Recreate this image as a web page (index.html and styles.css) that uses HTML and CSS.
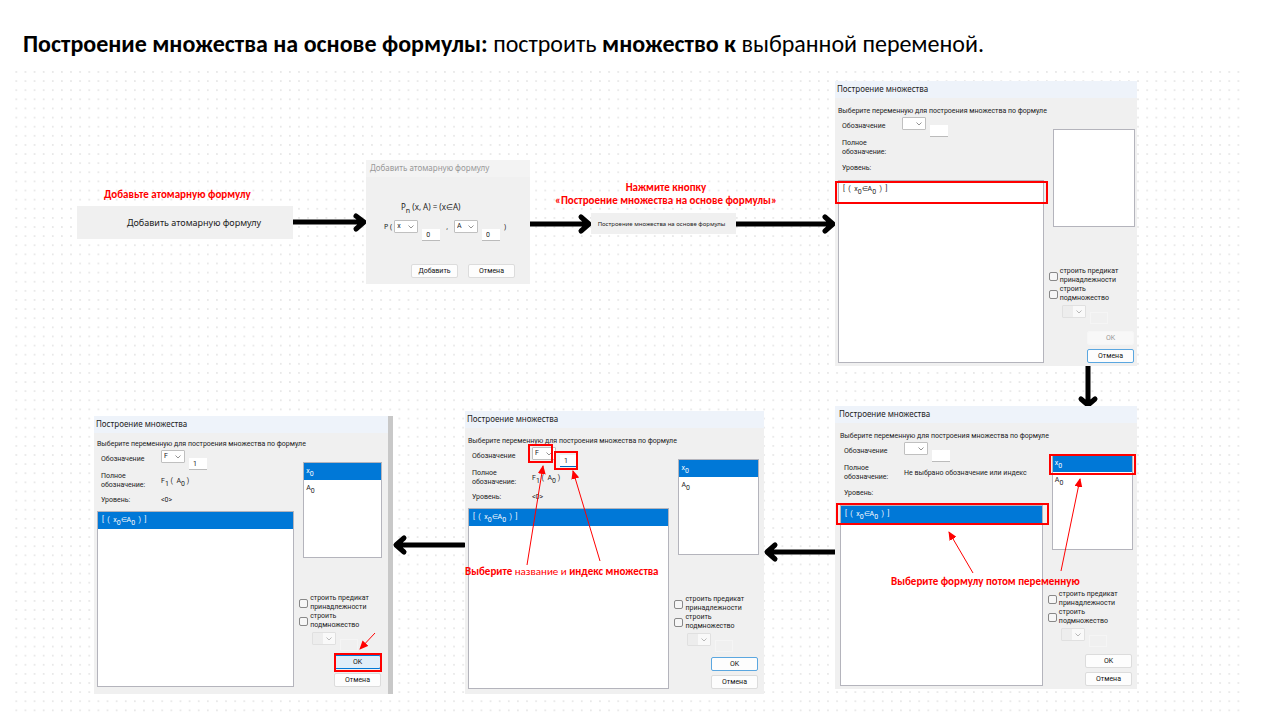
FILE: index.html
```html
<!DOCTYPE html>
<html lang="ru">
<head>
<meta charset="utf-8">
<title>Построение множества на основе формулы</title>
<link rel="stylesheet" href="styles.css">
</head>
<body>
<main class="slide">
  <svg class="layer" width="1280" height="720" viewBox="0 0 1280 720" aria-hidden="true">
    <defs>
      <pattern id="dots" x="11.8" y="67.4" width="9.12" height="9.12" patternUnits="userSpaceOnUse">
        <circle cx="4.5" cy="4.5" r="0.9" fill="#e2e2e2"/>
      </pattern>
    </defs>
    <rect x="12" y="67" width="1230" height="646" fill="url(#dots)"/>
    <g class="flow">
      <path d="M293 222H363M356 216L364 222L356 229"/>
      <path d="M530 224H588M581 217L589 224L581 231"/>
      <path d="M736 224H832M825 217L833 224L825 231"/>
      <path d="M1088 366V404M1081 399L1088 405L1095 399"/>
      <path d="M835 552H768M775 545L767 552L775 559"/>
      <path d="M464 545H397M404 538L396 545L404 552"/>
    </g>
  </svg>

  <h1 class="title">Построение множества на основе формулы: <span class="light">построить</span> множество к <span class="light">выбранной переменой.</span></h1>

  <p class="caption caption-add">Добавьте атомарную формулу</p>
  <button class="strip strip-add" type="button">Добавить атомарную формулу</button>

  <form class="atom">
    <h2 class="bar">Добавить атомарную формулу</h2>
    <p class="definition">P<sub>n</sub> (x, A) = (x∈A)</p>
    <div class="predicate">
      <span>P (</span>
      <select class="pick" aria-label="Переменная"><option>x</option></select>
      <input class="index" aria-label="Индекс переменной" value="0">
      <span class="comma">,</span>
      <select class="pick" aria-label="Множество"><option>A</option></select>
      <input class="index" aria-label="Индекс множества" value="0">
      <span>)</span>
    </div>
    <div class="atom-actions">
      <button class="btn" type="button">Добавить</button>
      <button class="btn" type="button">Отмена</button>
    </div>
  </form>

  <p class="caption caption-press">Нажмите кнопку<br>«Построение множества на основе формулы»</p>
  <button class="strip strip-build" type="button">Построение множества на основе формулы</button>

  <form class="dialog dialog-empty">
    <h2 class="bar">Построение множества</h2>
    <div class="body">
      <div class="left">
        <p class="prompt">Выберите переменную для построения множества по формуле</p>
        <div class="row"><span class="name">Обозначение</span><select class="pick" aria-label="Обозначение"><option></option></select><input class="index" aria-label="Индекс"></div>
        <div class="row full"><span class="name">Полное обозначение:</span><span></span></div>
        <div class="row level"><span class="name">Уровень:</span><span></span></div>
        <ul class="list formulas"><li>[ &nbsp;( &nbsp;x<sub>0</sub>∈A<sub>0</sub> &nbsp;) &nbsp;]</li></ul>
      </div>
      <div class="right">
        <ul class="list variables"></ul>
        <div class="options">
          <label class="check"><input type="checkbox"><span>строить предикат принадлежности</span></label>
          <label class="check"><input type="checkbox"><span>строить подмножество</span></label>
          <div class="sub"><select class="pick" aria-label="Подмножество" disabled><option></option></select><input class="index" aria-label="Индекс подмножества" disabled></div>
        </div>
        <div class="actions"><button class="btn" type="button" disabled>OK</button><button class="btn focus" type="button">Отмена</button></div>
      </div>
    </div>
  </form>

  <form class="dialog dialog-chosen">
    <h2 class="bar">Построение множества</h2>
    <div class="body">
      <div class="left">
        <p class="prompt">Выберите переменную для построения множества по формуле</p>
        <div class="row"><span class="name">Обозначение</span><select class="pick" aria-label="Обозначение"><option></option></select><input class="index" aria-label="Индекс"></div>
        <div class="row full"><span class="name">Полное обозначение:</span><span>Не выбрано обозначение или индекс</span></div>
        <div class="row level"><span class="name">Уровень:</span><span></span></div>
        <ul class="list formulas"><li class="on">[ &nbsp;( &nbsp;x<sub>0</sub>∈A<sub>0</sub> &nbsp;) &nbsp;]</li></ul>
      </div>
      <div class="right">
        <ul class="list variables"><li class="on">x<sub>0</sub></li><li>A<sub>0</sub></li></ul>
        <div class="options">
          <label class="check"><input type="checkbox"><span>строить предикат принадлежности</span></label>
          <label class="check"><input type="checkbox"><span>строить подмножество</span></label>
          <div class="sub"><select class="pick" aria-label="Подмножество" disabled><option></option></select><input class="index" aria-label="Индекс подмножества" disabled></div>
        </div>
        <div class="actions"><button class="btn" type="button">OK</button><button class="btn" type="button">Отмена</button></div>
      </div>
    </div>
  </form>

  <form class="dialog dialog-named">
    <h2 class="bar">Построение множества</h2>
    <div class="body">
      <div class="left">
        <p class="prompt">Выберите переменную для построения множества по формуле</p>
        <div class="row"><span class="name">Обозначение</span><select class="pick" aria-label="Обозначение"><option>F</option></select><input class="index editing" aria-label="Индекс" value="1"></div>
        <div class="row full"><span class="name">Полное обозначение:</span><span>F<sub>1</sub> ( &nbsp;A<sub>0</sub> )</span></div>
        <div class="row level"><span class="name">Уровень:</span><span>&lt;0&gt;</span></div>
        <ul class="list formulas"><li class="on">[ &nbsp;( &nbsp;x<sub>0</sub>∈A<sub>0</sub> &nbsp;) &nbsp;]</li></ul>
      </div>
      <div class="right">
        <ul class="list variables"><li class="on">x<sub>0</sub></li><li>A<sub>0</sub></li></ul>
        <div class="options">
          <label class="check"><input type="checkbox"><span>строить предикат принадлежности</span></label>
          <label class="check"><input type="checkbox"><span>строить подмножество</span></label>
          <div class="sub"><select class="pick" aria-label="Подмножество" disabled><option></option></select><input class="index" aria-label="Индекс подмножества" disabled></div>
        </div>
        <div class="actions"><button class="btn focus" type="button">OK</button><button class="btn" type="button">Отмена</button></div>
      </div>
    </div>
  </form>

  <form class="dialog dialog-final">
    <h2 class="bar">Построение множества</h2>
    <div class="body">
      <div class="left">
        <p class="prompt">Выберите переменную для построения множества по формуле</p>
        <div class="row"><span class="name">Обозначение</span><select class="pick" aria-label="Обозначение"><option>F</option></select><input class="index" aria-label="Индекс" value="1"></div>
        <div class="row full"><span class="name">Полное обозначение:</span><span>F<sub>1</sub> ( &nbsp;A<sub>0</sub> )</span></div>
        <div class="row level"><span class="name">Уровень:</span><span>&lt;0&gt;</span></div>
        <ul class="list formulas"><li class="on">[ &nbsp;( &nbsp;x<sub>0</sub>∈A<sub>0</sub> &nbsp;) &nbsp;]</li></ul>
      </div>
      <div class="right">
        <ul class="list variables"><li class="on">x<sub>0</sub></li><li>A<sub>0</sub></li></ul>
        <div class="options">
          <label class="check"><input type="checkbox"><span>строить предикат принадлежности</span></label>
          <label class="check"><input type="checkbox"><span>строить подмножество</span></label>
          <div class="sub"><select class="pick" aria-label="Подмножество" disabled><option></option></select><input class="index" aria-label="Индекс подмножества" disabled></div>
        </div>
        <div class="actions"><button class="btn hot" type="button">OK</button><button class="btn" type="button">Отмена</button></div>
      </div>
    </div>
  </form>

  <svg class="layer" width="1280" height="720" viewBox="0 0 1280 720" aria-hidden="true">
    <defs>
      <marker id="tip" markerWidth="9" markerHeight="8" refX="8" refY="4" orient="auto" markerUnits="userSpaceOnUse">
        <path d="M0 0L9 4L0 8Z" fill="#f00"/>
      </marker>
    </defs>
    <g class="frames">
      <rect x="836" y="182" width="211" height="21"/>
      <rect x="837" y="504" width="211" height="20"/>
      <rect x="1050" y="455" width="85" height="19"/>
      <rect x="529" y="445" width="23" height="17"/>
      <rect x="555" y="452" width="22" height="17"/>
      <rect x="335" y="654" width="46" height="17"/>
    </g>
    <g class="pointers">
      <path d="M973 573L949 532"/>
      <path d="M1061 571L1080 479"/>
      <path d="M527 565L543 466"/>
      <path d="M600 561L573 471"/>
      <path d="M375 633L360 649"/>
    </g>
  </svg>
  <p class="caption caption-name">Выберите <span class="light">название и</span> индекс множества</p>
  <p class="caption caption-choose">Выберите формулу потом переменную</p>
</main>
</body>
</html>
```

FILE: styles.css
```css
* { box-sizing: border-box; }
body { margin: 0; background: #fff; font-family: "Noto Sans", sans-serif; }
h1, h2, p, ul { margin: 0; padding: 0; font-weight: normal; }
ul { list-style: none; }

.slide { position: relative; min-height: 100vh; overflow: hidden; }
.layer { position: absolute; left: 0; top: 0; pointer-events: none; }
.flow { fill: none; stroke: #000; stroke-width: 5; stroke-linejoin: round; stroke-linecap: round; }
.frames { fill: none; stroke: #f00; stroke-width: 2; }
.pointers { fill: none; stroke: #f00; stroke-width: 1; }
.pointers path { marker-end: url(#tip); }

.title { position: relative; padding: 30px 23px 0; font: bold 24px/28px Carlito, Lato, sans-serif; color: #000; }
.light { font-weight: normal; }

.caption { position: absolute; font: bold 11px/13px Carlito, Lato, sans-serif; color: #f00; white-space: nowrap; text-align: center; }
.caption-add { left: 104px; top: 188px; }
.caption-press { left: 555px; top: 181px; }
.caption-name { left: 465px; top: 565px; }
.caption-choose { left: 891px; top: 575px; }

.strip { position: absolute; display: block; border: 0; padding: 0; background: #f0f0f0; color: #222; font-family: inherit; white-space: nowrap; }
.strip-add { left: 77px; top: 206px; width: 216px; height: 33px; font-size: 9px; padding-left: 18px; }
.strip-build { left: 591px; top: 213px; width: 145px; height: 21px; font-size: 6px; padding-right: 4px; }

.btn { height: 14px; width: 47px; padding: 0; border: 1px solid #dcdcdc; border-radius: 2px; background: #fdfdfd; color: #111; font: 7px/10px Roboto, sans-serif; }
.btn:disabled { border-color: #f6f6f6; background: #f8f8f8; color: #999; }
.btn.focus { border-color: #5ba7e0; }
.btn.hot { background: #e0eef9; border-color: #0078d7; }

.pick { appearance: none; width: 24px; height: 13px; padding: 0 0 0 2px; border: 1px solid #c0c0c0; border-radius: 1px; color: #222; font: 7px/11px Roboto, sans-serif;
  background: #fff url("data:image/svg+xml,%3Csvg xmlns='http://www.w3.org/2000/svg' width='6' height='4'%3E%3Cpath d='M.5 .5L3 3L5.500 .5' fill='none' stroke='%23777' stroke-width='.8'/%3E%3C/svg%3E") no-repeat right 3px center; }
.pick:disabled { border-color: #d6d6d6; box-shadow: inset 10px 0 #ececec; opacity: .6; }
.index { width: 18px; height: 12px; padding: 0 0 0 4px; border: 0; border-bottom: 1px solid #bbb; background: #fff; color: #222; font: 7px/10px Roboto, sans-serif; }
.index:disabled { border: 1px solid #f5f5f5; background: #f0f0f0; }
.index.editing { border-bottom-color: #0067c0; }
sub { font-size: 7px; line-height: 0; vertical-align: -3px; }

.atom { position: absolute; left: 366px; top: 160px; width: 164px; background: #f0f0f0; color: #222; font-size: 7px; padding-bottom: 6px; }
.bar { height: 17px; padding-left: 2px; background: #eef3fa; color: #222; font-family: "Noto Sans", sans-serif; font-size: 8px; line-height: 16px; white-space: nowrap; }
.atom .bar { background: #f3f3f3; color: #999; padding-left: 4px; }
.definition { padding: 25px 0 0 35px; font-size: 8px; line-height: 10px; }
.predicate { display: flex; align-items: flex-start; gap: 4px; padding: 8px 0 0 18px; line-height: 14px; }
.predicate span:first-child { margin-right: -2px; }
.predicate .index { margin-top: 9px; }
.comma { margin: 0 2px; }
.atom-actions { display: flex; gap: 10px; padding: 23px 0 0 45px; }

.dialog { position: absolute; display: flex; flex-direction: column; background: #f0f0f0; color: #222; font-family: Roboto, sans-serif; font-size: 7px; line-height: 9px; --gap: 7px; --stack: 8px; }
.dialog-empty { left: 835px; top: 81px; width: 302px; height: 285px; }
.dialog-chosen { left: 835px; top: 406px; width: 302px; height: 283px; }
.dialog-chosen .bar { padding-left: 4px; }
.dialog-chosen .body { padding-left: 5px; padding-right: 4px; }
.dialog-named { left: 465px; top: 411px; width: 299px; height: 283px; --gap: 6px; --stack: 6px; }
.dialog-named .body { padding: 0 5px 5px 3px; }
.dialog-final { left: 94px; top: 416px; width: 299px; height: 278px; border-right: 5px solid #c8c8c8; --gap: 6px; --stack: 5px; }
.dialog-final .body { padding: 0 6px 7px 3px; }

.body { flex: 1; display: flex; gap: 9px; padding: 0 2px 3px 3px; }
.left { flex: 205; min-width: 0; display: flex; flex-direction: column; padding-top: 9px; }
.right { flex: 82; min-width: 0; display: flex; flex-direction: column; padding-top: 31px; }
.dialog-final .left { padding-top: 7px; }
.dialog-final .right { padding-top: 29px; }
.prompt { white-space: nowrap; }
.row { display: grid; grid-template-columns: 56px auto 1fr; column-gap: 4px; padding-left: 4px; align-items: center; white-space: nowrap; }
.row .pick { align-self: start; margin-top: 1px; }
.row .index { align-self: end; }
.row:not(.full):not(.level) { height: 21px; }
.name { white-space: normal; }
.full { margin-top: 2px; }
.level { margin-top: var(--gap); }
.list { border: 1px solid #b4b4bc; background: #fff; line-height: 16px; overflow: hidden; }
.list li { height: 17px; padding-left: 2px; }
.list .on { background: #0078d7; color: #fff; }
.formulas { flex: 1; margin-top: var(--gap); }
.formulas li { padding-left: 4px; }
.variables { height: 96px; }
.dialog-empty .variables { height: 98px; }
.options { margin-top: auto; margin-left: -4px; }
.check { display: flex; align-items: center; gap: 2px; }
.check input { appearance: none; flex: none; width: 9px; height: 9px; margin: 0; border: 1px solid #888; border-radius: 2px; background: #f6f6f6; }
.sub { display: flex; gap: 4px; height: 20px; padding: 2px 0 0 13px; }
.sub .index { margin-top: 7px; }
.actions { display: flex; flex-direction: column; align-items: flex-end; gap: 4px; margin: var(--stack) 1px 0 0; }
```
